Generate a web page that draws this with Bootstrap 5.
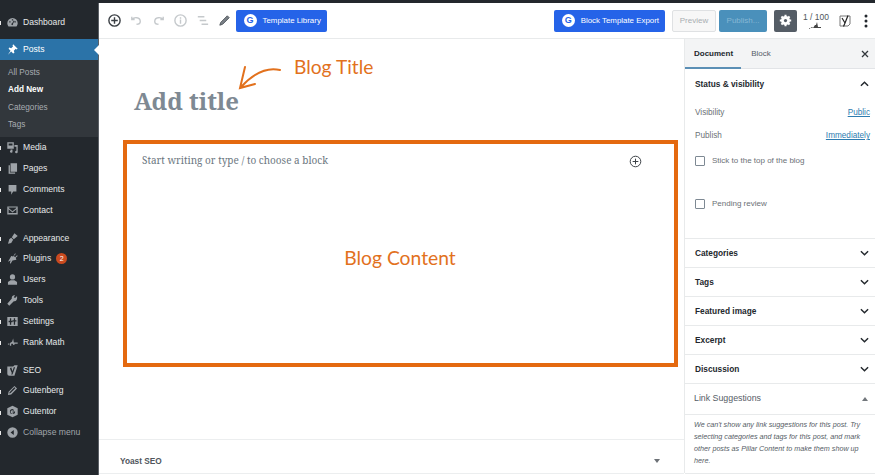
<!doctype html>
<html lang="en">
<head>
<meta charset="utf-8">
<title>Add New Post</title>
<link href="https://cdn.jsdelivr.net/npm/bootstrap@5.3.0/dist/css/bootstrap.min.css" rel="stylesheet">
<style>
html,body{height:475px;overflow:hidden}
body{font-family:"Liberation Sans",Arial,sans-serif;font-size:9px;color:#32373c;background:#fff}
.strip{height:3px;background:#23282d}
.shell{height:472px}
.wpside{width:99px;flex:none;background:#23282d;color:#eee;border-right:1px solid #5b6066;padding-top:9px;font-size:8.6px}
.wprow{height:20.85px;padding-left:6px;gap:4px;color:#e6e8ea;background:linear-gradient(#e8e8e8,#e8e8e8) 0 55%/1px 4px no-repeat}
.wprow svg{width:13px;height:13px;fill:#9ea3a8;flex:none}
.wprow.cur{background:#2b73a8;color:#fff;height:21px;margin-top:6px;position:relative}
.wprow.cur svg{fill:#fff}
.wprow.cur::after{content:"";position:absolute;right:-1px;top:6px;border:5px solid transparent;border-right-color:#fff;border-left:0}
.sub{background:#32373c;padding:4px 0 4px 8px;height:77.400px;font-size:8.200px;color:#a8adb2}
.sub div{height:17.4px;line-height:17.4px}
.sub .on{color:#fff;font-weight:700}
.gapt{margin-top:7px}
.count{width:11px;height:11px;border-radius:50%;background:#ca4a1f;color:#fff;font-size:7px;line-height:11px;text-align:center;margin-left:1px}
.muted{color:#a0a5aa}
.tbar{height:36px;border-bottom:1px solid #e8eaeb;padding:0 7px 0 8px}
.tbar .ic{width:15px;height:15px;flex:none;fill:none;stroke:#c5c9cc;stroke-width:1.5}
.tbar .ic.dk{stroke:#3a3f44}
.blue{background:#2563e8;color:#fff;height:22px;border-radius:2px;font-size:7.900px;padding:0 7px 0 8px;gap:6px;border:0;white-space:nowrap}
.gdot{width:13px;height:13px;border-radius:50%;background:#fff;color:#2563e8;font-weight:700;font-size:9px;line-height:13px;text-align:center}
.pv{width:44px;height:22px;border:1px solid #dfe1e3;border-radius:2px;background:#f7f7f7;color:#a8adb1;font-size:8px}
.pb{width:48px;height:22px;border-radius:2px;background:#4a90bb;color:#86b7d4;font-size:8px}
.gear{width:23px;height:22px;border-radius:2px;background:#555d66}
.cnt{font-size:8.5px;line-height:10px;color:#50565c;width:24px;white-space:nowrap}
.edit{flex:1;min-width:0}
.ttlrow{height:101px;padding-left:35px;padding-top:46px;position:relative}
.ttl{font-family:"Noto Serif","DejaVu Serif",serif;font-weight:700;font-size:24px;line-height:32px;color:#7e8993}
.bt{position:absolute;left:195px;top:14px;font-family:Lato,sans-serif;font-size:19.2px;color:#e2711d;line-height:28px}
.arw{position:absolute;left:139px;top:26px;width:44px;height:26px}
.box{height:227px;margin-left:24px;width:555px;border:4px solid #e4690f;padding:9px 15px;position:relative}
.ph{font-family:"Noto Serif","DejaVu Serif",serif;font-size:10px;color:#6c7781;line-height:14px}
.plus{position:absolute;right:32px;top:11px;width:13px;height:13px;fill:none;stroke:#3a3f44;stroke-width:1.2}
.bc{font-family:Lato,sans-serif;font-size:19.300px;color:#e2711d;line-height:28px;text-align:center;margin-top:77px;padding-right:1px}
.yoast{height:35px;border-top:1px solid #eceeef;border-bottom:1px solid #eceeef;margin-top:auto;padding:9px 24px 0 21px;font-weight:700;font-size:8.300px;color:#50565c;margin-bottom:1px}
.tri{width:0;height:0;border:3px solid transparent;border-top:4px solid #6c7176;border-bottom:0}
.panel{width:191px;flex:none;border-left:1px solid #e8eaeb;height:434px}
.tabs{height:30px;background:#f3f4f5;border-bottom:1px solid #e2e4e7;padding:0 6px 0 9px;font-size:8px;color:#555d66;position:relative}
.tabs b{color:#23282d;font-weight:700;margin-right:18px}
.tabs::after{content:"";position:absolute;left:0;bottom:-1px;width:56px;height:2px;background:#5b8fb5}
.sta{height:170px;border-bottom:1px solid #e8eaeb;padding:9px 5px 0 10px;color:#6c7176;font-size:8.200px}
.hd{font-weight:700;color:#23282d;font-size:8.300px}
.sta a{color:#2e7cb0}
.chk{width:10px;height:10px;border:1px solid #7e8993;border-radius:1px;margin-right:7px;background:#fff}
.chkrow{font-size:8px;line-height:12px}
.rowp{height:29px;border-bottom:1px solid #e8eaeb;padding:0 6px 0 10px}
.ch{width:9px;height:6px;fill:none;stroke:#23282d;stroke-width:1.6}
.ls{height:31px;border-bottom:1px solid #e8eaeb;padding:0 7px 0 9px;font-size:8.800px;color:#555d66}
.tru{width:0;height:0;border:3px solid transparent;border-bottom:4px solid #72777c;border-top:0}
.note{font-style:italic;font-size:7.200px;line-height:12px;padding:4px 8px 0 9px;color:#555d66;height:59px;border-bottom:1px solid #e8eaeb}
</style>
</head>
<body>
<svg width="0" height="0" class="d-block">
<symbol id="circ" viewBox="0 0 20 20"><path fill-rule="evenodd" d="M10 3a8 8 0 0 0-8 8c0 2 1 4 2 5h12c1-1 2-3 2-5a8 8 0 0 0-8-8zM9 5h2v2H9zM5 8h2v2H5zm8 0h2v2h-2zM9 14a1.500 1.500 0 0 1 .5-2.800L12 7l1 .5-2.200 4.500A1.500 1.500 0 0 1 9 14z"/></symbol>
<symbol id="pin" viewBox="0 0 20 20"><path d="M11 2l7 7-2 1-1-1-3 3 1 3-2 1-3-3-5 5 4-6-3-3 1-2 3 1 3-3-1-1z"/></symbol>
<symbol id="med" viewBox="0 0 20 20"><path fill-rule="evenodd" d="M2 2h10v10H2zm2 2v3h6V4zM13 6h5v11a2 2 0 1 1-2-2V9h-3zM7 13h3v3a2 2 0 1 1-3-1.500z"/></symbol>
<symbol id="pag" viewBox="0 0 20 20"><path d="M7 2h10v13H7zM4 5h2v11h8v2H4z"/></symbol>
<symbol id="com" viewBox="0 0 20 20"><path d="M4 3h12v10h-5l-3 5v-5H4z"/></symbol>
<symbol id="env" viewBox="0 0 20 20"><path d="M2 4h16v12H2zm2 2l6 5 6-5v-.5H4zm0 2v6h12V8l-6 5z" fill-rule="evenodd"/></symbol>
<symbol id="brs" viewBox="0 0 20 20"><path d="M13 2l5 4-6 5-3-3zM8 9l3 3-3 5-5 1 1-3 1-4z"/></symbol>
<symbol id="plg" viewBox="0 0 20 20"><path d="M14 2l1 1-3 3 2 2 3-3 1 1-3 3 1 3-6 1-3 5-1-1 1-4-4 2 3-5 2-4 3 1z"/></symbol>
<symbol id="usr" viewBox="0 0 20 20"><circle cx="10" cy="6" r="4"/><path d="M3 18v-4l4-3h6l4 3v4z"/></symbol>
<symbol id="wr" viewBox="0 0 20 20"><path d="M17 3l-3 3-2-1 2-3c-3-1-6 2-5 5L2 15l3 3 7-7c3 1 6-2 5-8z"/></symbol>
<symbol id="set" viewBox="0 0 20 20"><path d="M2 3h16v14H2zm4 2v4H4v2h2v4h2v-4h2V9H8V5zm6 0v3h-2v2h2v5h2v-5h2V8h-2V5z" fill-rule="evenodd"/></symbol>
<symbol id="rm" viewBox="0 0 20 20"><path d="M1 13l3-2 1 2 3-4 1 1 2-6 1 6h6v2h-5v2h-2v-2H8v3H6v-3H4v2H3v-2z"/></symbol>
<symbol id="ys" viewBox="0 0 20 20"><path d="M2 4h9l2-2h5l-5 16H5a3 3 0 0 1-3-3zm4 3l3 7-1 2h2l4-11h-2l-2 6-2-6z" fill-rule="evenodd"/></symbol>
<symbol id="pen" viewBox="0 0 20 20"><path fill-rule="evenodd" d="M13 3l4 4-9 9-5 1 1-5zm0 2l-7.500 7.500-.5 2 2-.5L14.500 6.500z"/></symbol>
<symbol id="gt" viewBox="0 0 20 20"><path d="M10 1l8 4v10l-8 4-8-4V5zm0 5a4 4 0 1 0 4 4h-4v1.500h2a2.500 2.500 0 1 1-.6-2.600l1-1A4 4 0 0 0 10 6z" fill-rule="evenodd"/></symbol>
<symbol id="col" viewBox="0 0 20 20"><path d="M10 2a8 8 0 1 1 0 16 8 8 0 0 1 0-16zm2 4l-5 4 5 4z" fill-rule="evenodd"/></symbol>
</svg>
<div class="strip"></div>
<div class="d-flex shell">
  <aside class="wpside">
    <div class="wprow d-flex align-items-center"><svg><use href="#circ"/></svg>Dashboard</div>
    <div class="wprow cur d-flex align-items-center"><svg><use href="#pin"/></svg>Posts</div>
    <div class="sub"><div>All Posts</div><div class="on">Add New</div><div>Categories</div><div>Tags</div></div>
    <div class="wprow d-flex align-items-center"><svg><use href="#med"/></svg>Media</div>
    <div class="wprow d-flex align-items-center"><svg><use href="#pag"/></svg>Pages</div>
    <div class="wprow d-flex align-items-center"><svg><use href="#com"/></svg>Comments</div>
    <div class="wprow d-flex align-items-center"><svg><use href="#env"/></svg>Contact</div>
    <div class="wprow gapt d-flex align-items-center"><svg><use href="#brs"/></svg>Appearance</div>
    <div class="wprow d-flex align-items-center"><svg><use href="#plg"/></svg>Plugins <span class="count">2</span></div>
    <div class="wprow d-flex align-items-center"><svg><use href="#usr"/></svg>Users</div>
    <div class="wprow d-flex align-items-center"><svg><use href="#wr"/></svg>Tools</div>
    <div class="wprow d-flex align-items-center"><svg><use href="#set"/></svg>Settings</div>
    <div class="wprow d-flex align-items-center"><svg><use href="#rm"/></svg>Rank Math</div>
    <div class="wprow gapt d-flex align-items-center"><svg><use href="#ys"/></svg>SEO</div>
    <div class="wprow d-flex align-items-center"><svg><use href="#pen"/></svg>Gutenberg</div>
    <div class="wprow d-flex align-items-center"><svg><use href="#gt"/></svg>Gutentor</div>
    <div class="wprow d-flex align-items-center muted"><svg><use href="#col"/></svg>Collapse menu</div>
  </aside>
  <main class="flex-grow-1 d-flex flex-column" style="min-width:0">
    <div class="tbar d-flex align-items-center">
      <svg class="ic dk" viewBox="0 0 16 16"><circle cx="8" cy="8" r="6"/><path d="M8 4.500v7M4.500 8h7"/></svg>
      <svg class="ic" style="margin-left:7px" viewBox="0 0 16 16"><path d="M3 4v3h3M3.500 7C5 4 12 4 12 9c0 2-2 3-4 3"/></svg>
      <svg class="ic" style="margin-left:7px" viewBox="0 0 16 16"><path d="M13 4v3h-3M12.500 7C11 4 4 4 4 9c0 2 2 3 4 3"/></svg>
      <svg class="ic" style="margin-left:7px" viewBox="0 0 16 16"><circle cx="8" cy="8" r="6"/><path d="M8 7v4.500M8 4.500v1.500"/></svg>
      <svg class="ic" style="margin-left:7px" viewBox="0 0 16 16"><path d="M3 4h7M5 8h7M7 12h7"/></svg>
      <svg class="ic" style="margin-left:7px;stroke:#50565c;stroke-width:1" viewBox="0 0 16 16"><path d="M3 13l1-3 7-7 2 2-7 7z" fill="#7a8087"/></svg>
      <button class="blue d-flex align-items-center" style="margin-left:3.500px;padding-right:6px"><span class="gdot">G</span>Template Library</button>
      <button class="blue d-flex align-items-center ms-auto" style="margin-right:7px;padding-right:6px"><span class="gdot">G</span>Block Template Export</button>
      <div class="pv d-flex align-items-center justify-content-center">Preview</div>
      <div class="pb d-flex align-items-center justify-content-center" style="margin-left:3px">Publish...</div>
      <div class="gear d-flex align-items-center justify-content-center" style="margin-left:7px"><svg width="13" height="13" viewBox="0 0 16 16"><circle cx="8" cy="8" r="4" fill="none" stroke="#fff" stroke-width="3"/><path d="M8 1v14M1 8h14M3 3l10 10M13 3L3 13" stroke="#fff" stroke-width="2.500"/><circle cx="8" cy="8" r="2" fill="#555d66"/></svg></div>
      <div class="cnt text-center" style="margin-left:6px">1 / 100<svg class="d-block mx-auto" width="14" height="8" viewBox="0 0 14 8"><path d="M1 7l3-2 1 1 2-3 1 0 1-3 1 5h3v1H1z" fill="#444"/></svg></div>
      <svg style="margin-left:11px" width="14" height="14" viewBox="0 0 14 14" fill="none" stroke="#777"><path d="M10 2H2v10h8l2-2V2z"/><path d="M4 4l3 5-1.500 3.500M10 1.500L7 9" stroke="#222" stroke-width="1.200"/></svg>
      <svg style="margin-left:12px" width="4" height="14" viewBox="0 0 4 14" fill="#23282d"><circle cx="2" cy="2" r="1.500"/><circle cx="2" cy="7" r="1.500"/><circle cx="2" cy="12" r="1.500"/></svg>
    </div>
    <div class="d-flex flex-grow-1" style="min-height:0">
      <div class="edit d-flex flex-column">
        <div class="ttlrow">
          <div class="ttl">Add title</div>
          <svg class="arw" viewBox="0 0 44 26" fill="none" stroke="#e2711d" stroke-width="2" stroke-linecap="round"><path d="M42 5C30 2 16 8 3 22M7 2L2 23l15-4"/></svg>
          <div class="bt">Blog Title</div>
        </div>
        <div class="box">
          <div class="ph">Start writing or type / to choose a block</div>
          <svg class="plus" viewBox="0 0 16 16"><circle cx="8" cy="8" r="6.500"/><path d="M8 4.500v7M4.500 8h7"/></svg>
          <div class="bc">Blog Content</div>
        </div>
        <div class="yoast d-flex align-items-center justify-content-between"><span>Yoast SEO</span><span class="tri"></span></div>
      </div>
      <div class="panel">
        <div class="tabs d-flex align-items-center"><b>Document</b><span>Block</span><svg class="ms-auto" width="8" height="8" viewBox="0 0 8 8" stroke="#32373c" stroke-width="1.300"><path d="M1 1l6 6M7 1L1 7"/></svg></div>
        <div class="sta">
          <div class="hd d-flex justify-content-between align-items-center" style="height:12px;padding-right:1px"><span>Status &amp; visibility</span><svg class="ch" viewBox="0 0 10 6"><path d="M1 5l4-4 4 4"/></svg></div>
          <div class="d-flex justify-content-between" style="margin-top:17px;line-height:12px"><span>Visibility</span><a href="#">Public</a></div>
          <div class="d-flex justify-content-between" style="margin-top:11px;line-height:12px"><span>Publish</span><a href="#">Immediately</a></div>
          <div class="d-flex align-items-center chkrow" style="margin-top:13px"><span class="chk"></span>Stick to the top of the blog</div>
          <div class="d-flex align-items-center chkrow" style="margin-top:31px"><span class="chk"></span>Pending review</div>
        </div>
        <div class="rowp hd d-flex justify-content-between align-items-center"><span>Categories</span><svg class="ch" viewBox="0 0 10 6"><path d="M1 1l4 4 4-4"/></svg></div>
        <div class="rowp hd d-flex justify-content-between align-items-center"><span>Tags</span><svg class="ch" viewBox="0 0 10 6"><path d="M1 1l4 4 4-4"/></svg></div>
        <div class="rowp hd d-flex justify-content-between align-items-center"><span>Featured image</span><svg class="ch" viewBox="0 0 10 6"><path d="M1 1l4 4 4-4"/></svg></div>
        <div class="rowp hd d-flex justify-content-between align-items-center"><span>Excerpt</span><svg class="ch" viewBox="0 0 10 6"><path d="M1 1l4 4 4-4"/></svg></div>
        <div class="rowp hd d-flex justify-content-between align-items-center"><span>Discussion</span><svg class="ch" viewBox="0 0 10 6"><path d="M1 1l4 4 4-4"/></svg></div>
        <div class="ls d-flex justify-content-between align-items-center"><span>Link Suggestions</span><span class="tru"></span></div>
        <div class="note">We can't show any link suggestions for this post. Try selecting categories and tags for this post, and mark other posts as Pillar Content to make them show up here.</div>
      </div>
    </div>
  </main>
</div>
<script src="https://cdn.jsdelivr.net/npm/bootstrap@5.3.0/dist/js/bootstrap.bundle.min.js"></script>
</body>
</html>
